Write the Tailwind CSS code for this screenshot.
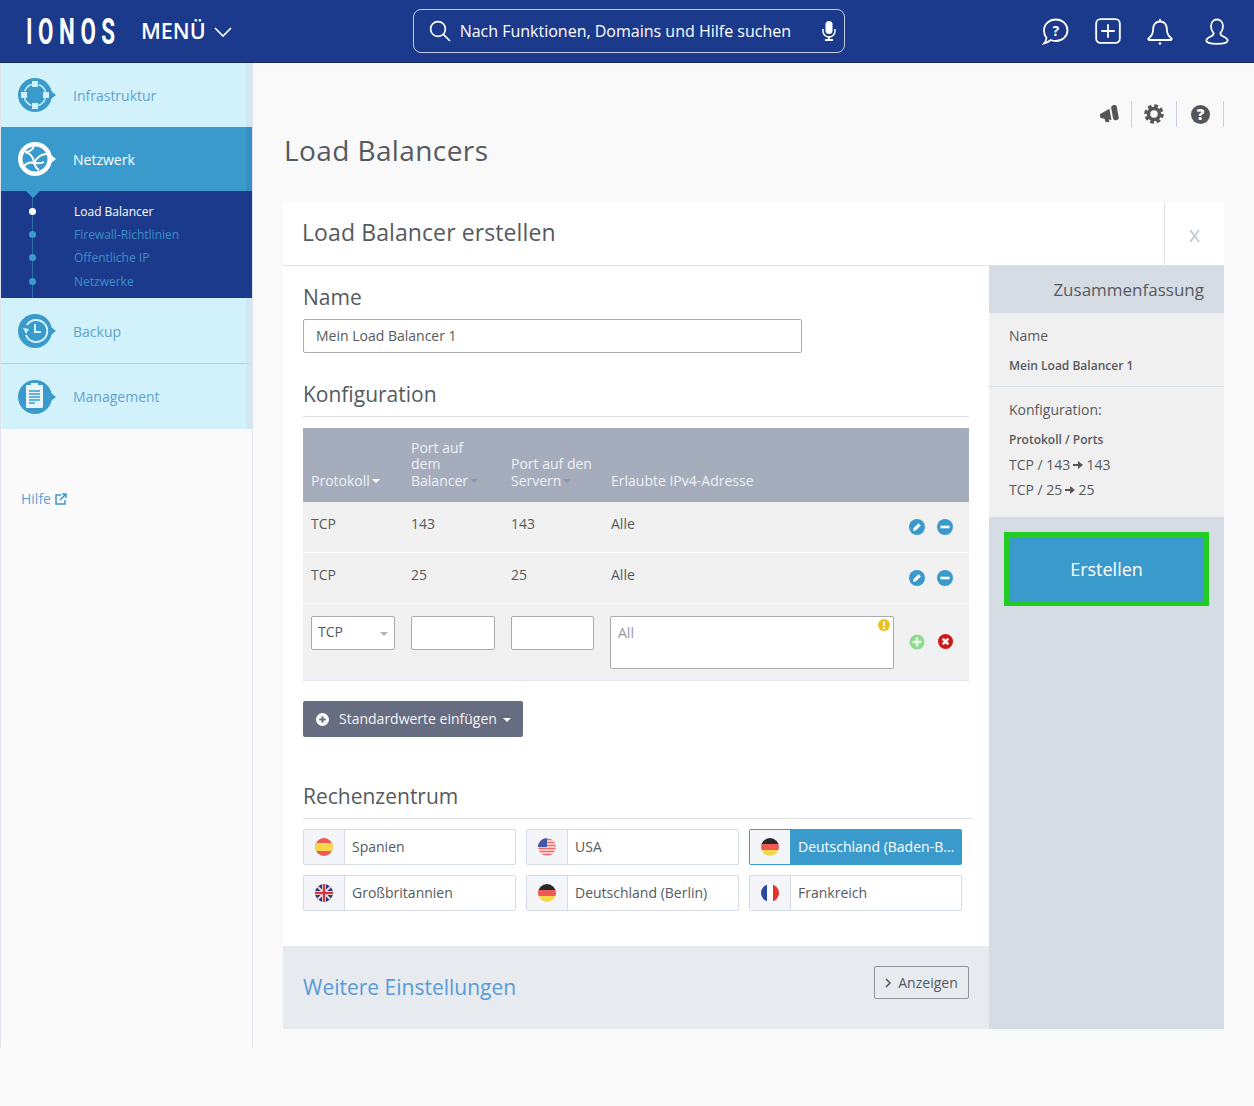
<!DOCTYPE html>
<html lang="de">
<head>
<meta charset="utf-8">
<title>Load Balancers</title>
<script src="https://cdn.jsdelivr.net/npm/@tailwindcss/browser@4"></script>
</head>
<body class="bg-[#f9f9f9] font-['Open_Sans',sans-serif] text-[#555a60] text-[14px]">
<svg width="0" height="0" class="absolute">
  <defs>
    <clipPath id="c"><circle cx="9" cy="9" r="9"/></clipPath>
  </defs>
</svg>
<header class="h-[63px] bg-[#1b3a8c] border-b border-[#12285f] flex items-center text-white">
  <div class="w-[141px] pl-[26px] pt-[1px]">
    <span class="block origin-left scale-x-[0.62] text-[36px] leading-none tracking-[9px] font-['Roboto',sans-serif] font-bold w-[150px]">IONOS</span>
  </div>
  <span class="text-[21.5px] font-semibold leading-none">MENÜ</span>
  <svg class="ml-[8px] mt-[2px]" width="18" height="11" viewBox="0 0 18 11" fill="none" stroke="#fff" stroke-width="1.6"><path d="M1 1l8 8 8-8"/></svg>
  <div class="ml-[181px] w-[432px] h-[44px] rounded-[8px] border border-[#c5cde0] flex items-center pl-[15px] pr-[8px] -mt-[1px]">
    <svg width="22" height="22" viewBox="0 0 22 22" fill="none" stroke="#fff" stroke-width="1.7"><circle cx="9" cy="9" r="7.4"/><path d="M14.5 14.5l6.5 6.5"/></svg>
    <span class="ml-[9px] text-[16px] whitespace-nowrap">Nach Funktionen, Domains und Hilfe suchen</span>
    <svg class="ml-auto" width="14" height="20" viewBox="0 0 14 20" fill="#fff"><rect x="3.5" y="0" width="7" height="13" rx="3.5"/><path d="M1 8v2a6 6 0 0 0 12 0V8" fill="none" stroke="#fff" stroke-width="1.5"/><path d="M6 15h2v3h3v2H3v-2h3z"/></svg>
  </div>
  <div class="ml-auto flex items-center pr-[25px] gap-[26px]">
    <svg width="27" height="27" viewBox="0 0 27 27" fill="none" stroke="#fff" stroke-width="1.8"><path d="M13.8 1.5c6.6 0 11.7 4.8 11.7 10.8S20.400 23 13.800 23c-1.800 0-3.500-.3-5-1-1.700 1.500-3.700 2.700-6.800 3.500 1.500-1.700 2.300-3.300 2.500-5.500C2.800 18 2 15.300 2 12.300 2 6.300 7.200 1.500 13.800 1.500z"/><text x="13.800" y="18" font-size="14" font-weight="700" fill="#fff" stroke="none" text-anchor="middle" font-family="Open Sans">?</text></svg>
    <svg width="26" height="26" viewBox="0 0 27 27" fill="none" stroke="#fff" stroke-width="1.9"><rect x="1.200" y="1.200" width="24.600" height="24.600" rx="4.500"/><path d="M13.500 6.500v14M6.500 13.500h14"/></svg>
    <svg width="26" height="27" viewBox="0 0 26 27" fill="none" stroke="#fff" stroke-width="1.8"><path d="M13 3.500c4.300 0 6.800 3.300 6.800 7.500 0 5 1.500 7 4.700 9.500 .5.500.2 1.500-.6 1.500H2.100c-.8 0-1.100-1-.6-1.500C4.700 18 6.200 16 6.200 11c0-4.200 2.500-7.500 6.800-7.500zM13 1v2.500"/><circle cx="13" cy="25.500" r="1.300" fill="#fff" stroke="none"/></svg>
    <svg class="ml-[6px]" width="24" height="27" viewBox="0 0 24 27" fill="none" stroke="#fff" stroke-width="1.8"><path d="M12 1.500c3.700 0 6 3 6 6.800 0 3-1 5-2.500 6.500-.4 1.500.3 2.500 2 3.300 2.700 1.200 5.200 2.200 5.200 4.400 0 2-3 3.300-10.700 3.300S1.300 24.500 1.300 22.500c0-2.200 2.500-3.200 5.200-4.400 1.700-.8 2.400-1.800 2-3.300C7 13.300 6 11.300 6 8.300c0-3.800 2.300-6.800 6-6.800z"/></svg>
  </div>
</header>

<div class="flex items-start">
  <nav class="w-[253px] h-[985px] shrink-0 bg-[#fafafa] border-l border-r border-[#dfe4ec] text-[14px]">
    <a class="h-[64px] flex items-center bg-[#d2f2fb] border-r-[6px] border-[#d2e6f3] text-[#5da4d0]">
      <svg class="ml-[16px] shrink-0" width="40" height="36" viewBox="0 0 40 36"><path d="M34 14l5 4-5 4z" fill="#3b9acc"/><circle cx="18" cy="18" r="17" fill="#3b9acc"/><circle cx="18" cy="18" r="11" fill="none" stroke="#d2f2fb" stroke-width="1.500" stroke-dasharray="10 7.280" stroke-dashoffset="-3.640"/><rect x="15" y="4" width="6" height="6" fill="#d2f2fb"/><rect x="15" y="26" width="6" height="6" fill="#d2f2fb"/><rect x="4" y="15" width="6" height="6" fill="#d2f2fb"/><rect x="26" y="15" width="6" height="6" fill="#d2f2fb"/></svg>
      <span class="ml-[16px]">Infrastruktur</span>
    </a>
    <a class="h-[64px] flex items-center bg-[#3b9acc] border-r-[6px] border-[#378fc4] text-white">
      <svg class="ml-[16px] shrink-0" width="40" height="36" viewBox="0 0 40 36"><path d="M34 14l5 4-5 4z" fill="#fff"/><circle cx="18" cy="18" r="17" fill="#fff"/><circle cx="18" cy="18" r="12.500" fill="#3b9acc"/><g fill="none" stroke="#fff" stroke-width="2"><path d="M8 11c6 1 8 5 9 10s3 7 5 8M30 13c-5 0-10 3-13 9M7 25c3-3 7-4 10-3 4 .500 7 1 10-1M17 5c-1 3-4 6-9 6"/></g></svg>
      <span class="ml-[16px]">Netzwerk</span>
    </a>
    <div class="relative h-[107px] bg-[#1b3a8c] text-[12px] text-[#3b8fc8] pt-[9px]">
      <div class="absolute left-[31px] top-0 h-full w-px bg-[#2f6ba8]"></div>
      <div class="absolute left-[25px] top-0 w-0 h-0 border-l-[7px] border-r-[7px] border-t-[7px] border-l-transparent border-r-transparent border-t-[#3b9acc]"></div>
      <a class="relative h-[23px] flex items-center text-white"><i class="ml-[28px] w-[7px] h-[7px] rounded-full bg-white"></i><span class="ml-[38px]">Load Balancer</span></a>
      <a class="relative h-[23px] flex items-center"><i class="ml-[28px] w-[7px] h-[7px] rounded-full bg-[#3b9acc]"></i><span class="ml-[38px]">Firewall-Richtlinien</span></a>
      <a class="relative h-[23px] flex items-center"><i class="ml-[28px] w-[7px] h-[7px] rounded-full bg-[#3b9acc]"></i><span class="ml-[38px]">Öffentliche IP</span></a>
      <a class="relative mt-[1px] h-[23px] flex items-center"><i class="ml-[28px] w-[7px] h-[7px] rounded-full bg-[#3b9acc]"></i><span class="ml-[38px]">Netzwerke</span></a>
    </div>
    <a class="h-[66px] flex items-center bg-[#d2f2fb] border-r-[6px] border-[#d2e6f3] border-b border-b-[#b5d5e5] border-t border-t-[#d2f2fb] text-[#5da4d0]">
      <svg class="ml-[16px] shrink-0" width="40" height="36" viewBox="0 0 40 36"><path d="M34 14l5 4-5 4z" fill="#3b9acc"/><circle cx="18" cy="18" r="17" fill="#3b9acc"/><g fill="none" stroke="#d2f2fb" stroke-width="2"><path d="M10 12a11 11 0 1 1-1 10"/><path d="M18 11v8h6"/></g><path d="M6 15l6 1-3 5z" fill="#d2f2fb"/></svg>
      <span class="ml-[16px]">Backup</span>
    </a>
    <a class="h-[65px] flex items-center bg-[#d2f2fb] border-r-[6px] border-[#d2e6f3] text-[#5da4d0]">
      <svg class="ml-[16px] shrink-0" width="40" height="36" viewBox="0 0 40 36"><path d="M34 14l5 4-5 4z" fill="#3b9acc"/><circle cx="18" cy="18" r="17" fill="#3b9acc"/><rect x="9" y="6" width="17" height="23" rx="1" fill="#e8f5fb"/><rect x="14" y="4" width="7" height="4" fill="#e8f5fb"/><path d="M12 12h11M12 15h11M12 18h11M12 21h11M12 24h6" stroke="#3b9acc" stroke-width="1.500"/></svg>
      <span class="ml-[16px]">Management</span>
    </a>
    <a class="mt-[59px] ml-[20px] flex items-center gap-[4px] text-[#5da4d0]">Hilfe
      <svg width="12" height="12" viewBox="0 0 12 12" fill="none" stroke="#3b9acc" stroke-width="1.500"><path d="M6 2H1v9h9V7M5 7l6-6M7 1h4v4"/></svg>
    </a>
  </nav>

  <main class="w-[941px] ml-[30px]">
    <div class="h-[72px] flex items-start justify-end pt-[38px]">
      <div class="h-[26px] pr-[11px] border-r border-[#c8cfda] flex items-center pt-[1px]">
        <svg width="21" height="19" viewBox="0 0 22 20" fill="#555"><g transform="rotate(-10 11 10)"><path d="M1 8l11-4v12L1 12z"/><rect x="14" y="1" width="6" height="16" rx="2.500"/></g><path d="M5 12l4-1 2 7H7z"/></svg>
      </div>
      <div class="h-[26px] px-[12px] border-r border-[#c8cfda] flex items-center">
        <svg width="20" height="20" viewBox="0 0 20 20" fill="none" stroke="#555"><circle cx="10" cy="10" r="5.500" stroke-width="3.500"/><circle cx="10" cy="10" r="8" stroke-width="3.500" stroke-dasharray="3.600 2.680"/></svg>
      </div>
      <div class="h-[26px] pl-[14px] pr-[13px] border-r border-[#c8cfda] flex items-center pt-[1px]">
        <svg width="19" height="19" viewBox="0 0 19 19"><circle cx="9.500" cy="9.500" r="9.500" fill="#555"/><text x="9.500" y="15" font-size="15" font-weight="800" fill="#fff" text-anchor="middle" font-family="Open Sans">?</text></svg>
      </div>
    </div>
    <h1 class="h-[67px] pl-[1px] text-[28px] leading-[30px] tracking-[0.4px] font-normal text-[#555a60]">Load Balancers</h1>

    <section class="bg-white flex flex-col h-[827px]">
      <div class="h-[64px] flex border-b border-[#dfe1e5]">
        <h2 class="flex-1 pl-[19px] text-[23px] leading-[60px] tracking-[0.1px]">Load Balancer erstellen</h2>
        <div class="w-[60px] border-l border-[#dfe1e5] flex items-center justify-center text-[22px] text-[#c3c8d0]">x</div>
      </div>
      <div class="flex flex-1">
        <div class="w-[706px] flex flex-col">
          <div class="flex-1 px-[20px]">
            <h3 class="text-[21px] leading-[30px] mt-[16px]">Name</h3>
            <input class="block mt-[7px] w-[499px] h-[34px] px-[12px] pb-[2px] border border-[#a8abb0] rounded-[2px] text-[14px] text-[#555a60] bg-white" value="Mein Load Balancer 1">
            <h3 class="text-[21px] leading-[30px] mt-[26px] pb-[7px] border-b border-[#dfe1e5]">Konfiguration</h3>

            <div class="mt-[11px] w-[666px] bg-[#f1f1f1] border-b border-[#dfe4ec]">
              <div class="h-[74px] bg-[#a5adbd] text-[#eef0f4] grid grid-cols-[100px_100px_100px_299px_67px] items-end pb-[13px] leading-[16.500px]">
                <div class="pl-[8px] flex items-center gap-[2px]">Protokoll<i class="mt-[1px] border-l-[4px] border-r-[4px] border-t-[4px] border-l-transparent border-r-transparent border-t-white"></i></div>
                <div class="pl-[8px]">Port auf<br>dem<br><span class="inline-flex items-center gap-[2px]">Balancer<i class="mt-[1px] border-l-[4px] border-r-[4px] border-t-[4px] border-l-transparent border-r-transparent border-t-[#8f97a8]"></i></span></div>
                <div class="pl-[8px]">Port auf den<br><span class="inline-flex items-center gap-[2px]">Servern<i class="mt-[1px] border-l-[4px] border-r-[4px] border-t-[4px] border-l-transparent border-r-transparent border-t-[#8f97a8]"></i></span></div>
                <div class="pl-[8px]">Erlaubte IPv4-Adresse</div>
                <div></div>
              </div>
              <div class="h-[51px] border-b border-white grid grid-cols-[100px_100px_100px_299px_67px] pt-[12px] leading-[19px]">
                <div class="pl-[8px]">TCP</div><div class="pl-[8px]">143</div><div class="pl-[8px]">143</div><div class="pl-[8px]">Alle</div>
                <div class="flex items-center gap-[12px] pl-[7px] h-[23px] pt-[3px]">
                  <svg width="16" height="16" viewBox="0 0 16 16"><circle cx="8" cy="8" r="8" fill="#3b9acc"/><path d="M4 12l.7-3 4.800-4.800 2.300 2.300L7 11.300z" fill="#fff"/></svg>
                  <svg width="16" height="16" viewBox="0 0 16 16"><circle cx="8" cy="8" r="8" fill="#3b9acc"/><rect x="3.500" y="6.700" width="9" height="2.600" fill="#fff"/></svg>
                </div>
              </div>
              <div class="h-[51px] border-b border-white grid grid-cols-[100px_100px_100px_299px_67px] pt-[12px] leading-[19px]">
                <div class="pl-[8px]">TCP</div><div class="pl-[8px]">25</div><div class="pl-[8px]">25</div><div class="pl-[8px]">Alle</div>
                <div class="flex items-center gap-[12px] pl-[7px] h-[23px] pt-[3px]">
                  <svg width="16" height="16" viewBox="0 0 16 16"><circle cx="8" cy="8" r="8" fill="#3b9acc"/><path d="M4 12l.7-3 4.800-4.800 2.300 2.300L7 11.300z" fill="#fff"/></svg>
                  <svg width="16" height="16" viewBox="0 0 16 16"><circle cx="8" cy="8" r="8" fill="#3b9acc"/><rect x="3.500" y="6.700" width="9" height="2.600" fill="#fff"/></svg>
                </div>
              </div>
              <div class="h-[76px] grid grid-cols-[100px_100px_100px_299px_67px] pt-[12px]">
                <div class="pl-[8px]">
                  <div class="w-[84px] h-[34px] bg-white border border-[#a8abb0] rounded-[2px] flex items-center justify-between pl-[6px] pr-[6px] pb-[3px]">TCP<i class="mt-[4px] border-l-[4px] border-r-[4px] border-t-[4px] border-l-transparent border-r-transparent border-t-[#b5b5b5]"></i></div>
                </div>
                <div class="pl-[8px]"><input class="block w-[84px] h-[34px] bg-white border border-[#a8abb0] rounded-[2px]"></div>
                <div class="pl-[8px]"><input class="block w-[83px] h-[34px] bg-white border border-[#a8abb0] rounded-[2px]"></div>
                <div class="pl-[7px] relative">
                  <textarea class="block w-[284px] h-[53px] bg-white border border-[#a8abb0] rounded-[2px] px-[7px] pt-[6px] leading-[19px] resize-none placeholder:text-[#999]" placeholder="All"></textarea>
                  <svg class="absolute left-[275px] top-[3px]" width="12" height="12" viewBox="0 0 12 12"><circle cx="6" cy="6" r="6" fill="#f0c020"/><rect x="5" y="2.500" width="2" height="4.500" fill="#fff"/><rect x="5" y="8" width="2" height="2" fill="#fff"/></svg>
                </div>
                <div class="flex items-start gap-[13px] pl-[7px] pt-[18px]">
                  <svg width="16" height="16" viewBox="0 0 16 16"><circle cx="8" cy="8" r="7.500" fill="#8fdb8f"/><path d="M3.500 8h9M8 3.500v9" stroke="#e6f5e6" stroke-width="2.600"/></svg>
                  <svg width="15" height="15" viewBox="0 0 16 16"><circle cx="8" cy="8" r="8" fill="#cc1a1a"/><path d="M5 5l6 6M11 5l-6 6" stroke="#fff" stroke-width="2.800"/></svg>
                </div>
              </div>
            </div>

            <button class="mt-[20px] h-[36px] w-[220px] bg-[#676d80] rounded-[2px] text-[#f4f4f6] flex items-center pl-[13px]">
              <svg width="13" height="13" viewBox="0 0 14 14"><circle cx="7" cy="7" r="7" fill="#fff"/><path d="M3.500 7h7M7 3.500v7" stroke="#676d80" stroke-width="2"/></svg>
              <span class="ml-[10px] pb-[1px]">Standardwerte einfügen</span>
              <i class="ml-[6px] mt-[1px] border-l-[4px] border-r-[4px] border-t-[4px] border-l-transparent border-r-transparent border-t-white"></i>
            </button>

            <h3 class="text-[21px] leading-[30px] mt-[44px] pb-[7px] border-b border-[#dfe1e5] w-[669px]">Rechenzentrum</h3>

            <div class="mt-[10px] w-[659px] grid grid-cols-3 gap-x-[10px] gap-y-[10px]">
              <div class="h-[36px] flex border border-[#d5dce3] rounded-[2px]">
                <div class="w-[41px] shrink-0 bg-[#f3f5f8] border-r border-[#d5dce3] flex items-center justify-center"><svg width="18" height="18" viewBox="0 0 18 18"><g clip-path="url(#c)"><rect width="18" height="18" fill="#ee5a55"/><rect y="5" width="18" height="8" fill="#f6d84c"/></g></svg></div>
                <span class="pl-[7px] leading-[34px]">Spanien</span>
              </div>
              <div class="h-[36px] flex border border-[#d5dce3] rounded-[2px]">
                <div class="w-[41px] shrink-0 bg-[#f3f5f8] border-r border-[#d5dce3] flex items-center justify-center"><svg width="18" height="18" viewBox="0 0 18 18"><g clip-path="url(#c)"><rect width="18" height="18" fill="#fbe5e2"/><path d="M0 1.500h18M0 4.500h18M0 7.500h18M0 10.500h18M0 13.500h18M0 16.500h18" stroke="#ee6a65" stroke-width="1.400"/><rect width="9" height="9" fill="#3f58a8"/></g></svg></div>
                <span class="pl-[7px] leading-[34px]">USA</span>
              </div>
              <div class="h-[36px] flex border border-[#3b9acc] rounded-[2px] bg-[#3b9acc] text-white">
                <div class="w-[40px] shrink-0 bg-[#f3f5f8] flex items-center justify-center"><svg width="18" height="18" viewBox="0 0 18 18"><g clip-path="url(#c)"><rect width="18" height="6" fill="#26282c"/><rect y="6" width="18" height="6" fill="#ee5a55"/><rect y="12" width="18" height="6" fill="#f6d84c"/></g></svg></div>
                <span class="pl-[8px] leading-[34px] truncate">Deutschland (Baden-Baden)</span>
              </div>
              <div class="h-[36px] flex border border-[#d5dce3] rounded-[2px]">
                <div class="w-[41px] shrink-0 bg-[#f3f5f8] border-r border-[#d5dce3] flex items-center justify-center"><svg width="18" height="18" viewBox="0 0 18 18"><g clip-path="url(#c)"><rect width="18" height="18" fill="#27357a"/><path d="M0 0l18 18M18 0L0 18" stroke="#f3d9dc" stroke-width="2"/><path d="M9 0v18M0 9h18" stroke="#fff" stroke-width="4"/><path d="M9 0v18M0 9h18" stroke="#d9323a" stroke-width="2.500"/></g></svg></div>
                <span class="pl-[7px] leading-[34px]">Großbritannien</span>
              </div>
              <div class="h-[36px] flex border border-[#d5dce3] rounded-[2px]">
                <div class="w-[41px] shrink-0 bg-[#f3f5f8] border-r border-[#d5dce3] flex items-center justify-center"><svg width="18" height="18" viewBox="0 0 18 18"><g clip-path="url(#c)"><rect width="18" height="6" fill="#26282c"/><rect y="6" width="18" height="6" fill="#ee5a55"/><rect y="12" width="18" height="6" fill="#f6d84c"/></g></svg></div>
                <span class="pl-[7px] leading-[34px]">Deutschland (Berlin)</span>
              </div>
              <div class="h-[36px] flex border border-[#d5dce3] rounded-[2px]">
                <div class="w-[41px] shrink-0 bg-[#f3f5f8] border-r border-[#d5dce3] flex items-center justify-center"><svg width="18" height="18" viewBox="0 0 18 18"><g clip-path="url(#c)"><rect width="6" height="18" fill="#2e4a9e"/><rect x="6" width="6" height="18" fill="#fff"/><rect x="12" width="6" height="18" fill="#e8302e"/></g></svg></div>
                <span class="pl-[7px] leading-[34px]">Frankreich</span>
              </div>
            </div>
          </div>
          <div class="h-[83px] bg-[#e7eaee] pl-[20px] pr-[20px] flex items-start justify-between">
            <span class="text-[21px] leading-[30px] mt-[26px] text-[#5a9bd8]">Weitere Einstellungen</span>
            <button class="mt-[20px] h-[33px] w-[95px] border border-[#8f949c] rounded-[2px] flex items-center justify-center gap-[6px] text-[#555a60]">
              <svg width="7" height="10" viewBox="0 0 7 10" fill="none" stroke="#555" stroke-width="1.500"><path d="M1 1l4 4-4 4"/></svg>Anzeigen
            </button>
          </div>
        </div>
        <aside class="w-[235px] bg-[#d5dce4]">
          <div class="h-[47px] pr-[20px] text-right text-[17px] leading-[47px]">Zusammenfassung</div>
          <div class="bg-[#f0f0f0] h-[204px]">
            <div class="h-[74px] border-b border-[#d9dfe7] pl-[20px]">
              <p class="pt-[13px] leading-[19px]">Name</p>
              <p class="mt-[13px] text-[12px] font-semibold leading-[16px]">Mein Load Balancer 1</p>
            </div>
            <div class="pl-[20px]">
              <p class="pt-[13px] leading-[19px]">Konfiguration:</p>
              <p class="mt-[13px] text-[12px] font-semibold leading-[16px]">Protokoll / Ports</p>
              <p class="mt-[8px] leading-[18px] flex items-center gap-[3px]">TCP / 143 <svg width="10" height="8" viewBox="0 0 10 8" fill="#555"><path d="M0 3h5V0l5 4-5 4V5H0z"/></svg> 143</p>
              <p class="mt-[7px] leading-[18px] flex items-center gap-[3px]">TCP / 25 <svg width="10" height="8" viewBox="0 0 10 8" fill="#555"><path d="M0 3h5V0l5 4-5 4V5H0z"/></svg> 25</p>
            </div>
          </div>
          <button class="block mt-[15px] ml-[15px] w-[205px] h-[74px] bg-[#3b9acc] border-[5px] border-[#22cc22] text-white text-[18px]">Erstellen</button>
        </aside>
      </div>
    </section>
  </main>
</div>
</body>
</html>
